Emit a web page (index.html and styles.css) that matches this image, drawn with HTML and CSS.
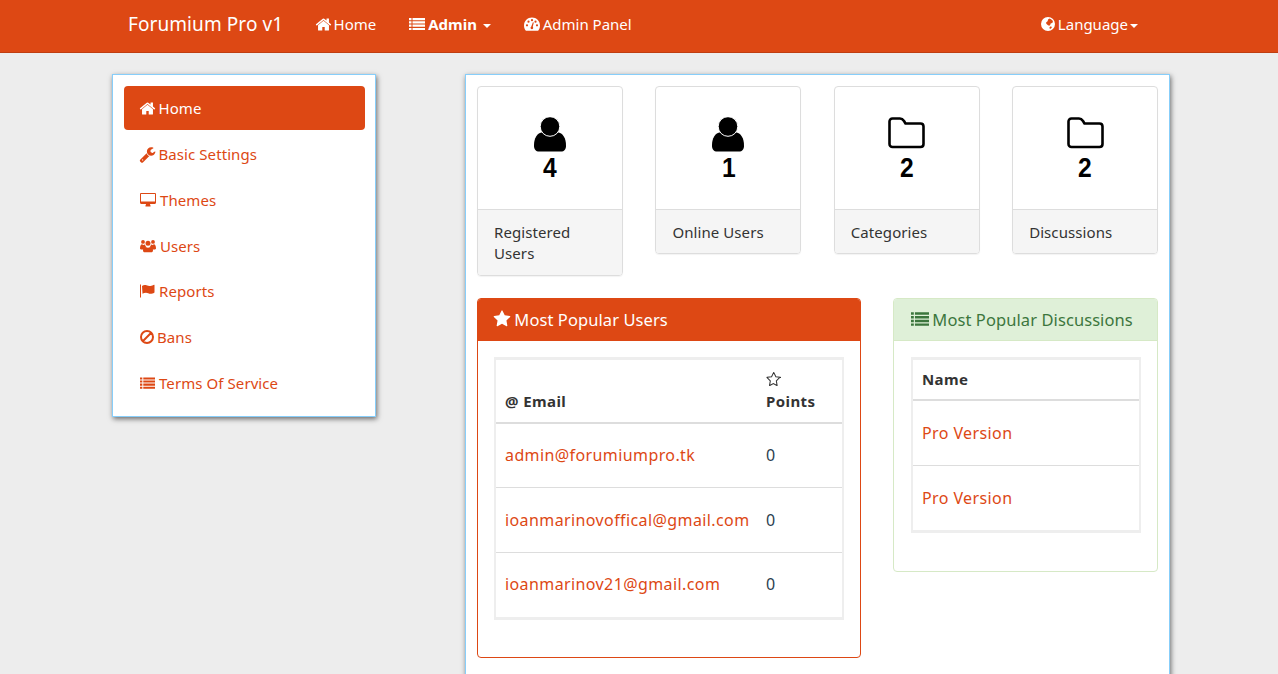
FILE: index.html
```html
<!DOCTYPE html>
<html lang="en">
<head>
<meta charset="utf-8">
<title>Forumium Pro v1</title>
<link rel="stylesheet" href="styles.css">
</head>
<body>
<svg class="sprite" aria-hidden="true">
  <symbol id="i-home" viewBox="0 0 1792 1792"><path d="M1472 992v480q0 26-19 45t-45 19h-384v-384h-256v384h-384q-26 0-45-19t-19-45v-480q0-1 .5-3t.5-3l575-474 575 474q1 2 1 6zm223-69l-62 74q-8 9-21 11h-3q-13 0-21-7l-692-577-692 577q-12 8-24 7-13-2-21-11l-62-74q-8-10-7-23.500t11-21.500l719-599q32-26 76-26t76 26l244 204v-195q0-14 9-23t23-9h192q14 0 23 9t9 23v408l219 182q10 8 11 21.500t-7 23.500z"/></symbol>
  <symbol id="i-list" viewBox="0 0 16 14"><path d="M0 1h2.500v2.200H0zM3.500 1H16v2.200H3.500zM0 4.300h2.500v2.200H0zM3.500 4.300H16v2.200H3.500zM0 7.600h2.500v2.200H0zM3.500 7.600H16v2.200H3.500zM0 10.900h2.500v2.200H0zM3.500 10.900H16v2.200H3.500z"/></symbol>
  <symbol id="i-gauge" viewBox="0 0 16 14"><path fill-rule="evenodd" d="M8 0.500C3.600 0.500 0 4 0 8.400c0 1.900.6 3.600 1.700 5 .1.200.3.300.5.300h11.600c.2 0 .4-.1.500-.3 1.100-1.400 1.700-3.100 1.700-5C16 4 12.400.5 8 .5zM3 9.400a1.100 1.100 0 1 1 0-2.200 1.100 1.100 0 0 1 0 2.200zM4.500 5.800a1.100 1.100 0 1 1 0-2.200 1.100 1.100 0 0 1 0 2.200zM8 4.300a1.100 1.100 0 1 1 0-2.200 1.100 1.100 0 0 1 0 2.200zM11.500 5.800a1.100 1.100 0 1 1 0-2.200 1.100 1.100 0 0 1 0 2.200zM13 9.400a1.100 1.100 0 1 1 0-2.200 1.100 1.100 0 0 1 0 2.200zM8 12.300a1.500 1.500 0 0 1-.7-2.800l1.600-4.200 .9.300-1 4.200A1.500 1.500 0 0 1 8 12.300z"/></symbol>
  <symbol id="i-globe" viewBox="0 0 14 14"><path fill-rule="evenodd" d="M7 0a7 7 0 1 0 0 14A7 7 0 0 0 7 0zM8.500 1.500c1 .3 2 .9 2.800 1.700.8 1 .8 2 .1 2.600-.6.500-1.300.2-1.800.9-.4.600-.1 1.300-.7 1.700-.7.400-1.500 0-2.200-.5C6 7.300 5 6.800 5.100 5.800c.1-.8 1-1 1.500-1.500.5-.6-.1-1.200.5-1.900.3-.4.800-.6 1.400-.9zM9.300 9.500c.7-.3 1.500.1 1.500.7 0 .7-1 1.600-1.700 1.600-.7 0-.8-.6-.6-1.200.1-.5.3-.9.800-1.100z"/></symbol>
  <symbol id="i-wrench" viewBox="0 0 1792 1792"><path d="M448 1472q0-26-19-45t-45-19-45 19-19 45 19 45 45 19 45-19 19-45zm644-420l-682 682q-37 37-90 37-52 0-91-37l-106-108q-38-36-38-90 0-53 38-91l681-681q39 98 114.500 173.500t173.500 114.500zm634-435q0 39-23 106-47 134-164.500 217.500t-258.500 83.500q-185 0-316.500-131.500t-131.500-316.500 131.500-316.500 316.500-131.500q58 0 121.500 16.500t107.500 46.500q16 11 16 28t-16 28l-293 169v224l193 107q5-3 79-48.500t135.500-81 70.500-35.500q15 0 23.500 10t8.500 25z"/></symbol>
  <symbol id="i-desktop" viewBox="0 0 16 14"><path fill-rule="evenodd" d="M1.200 0h13.600C15.500 0 16 .5 16 1.200v8.600c0 .7-.5 1.200-1.200 1.200H10c0 .8.300 1.300.6 1.700.2.300 0 .7-.4.700H5.800c-.4 0-.6-.4-.4-.7.300-.4.600-.9.600-1.700H1.200C.5 11 0 10.500 0 9.800V1.200C0 .5.500 0 1.200 0zM1 1v7.500h14V1z"/></symbol>
  <symbol id="i-users" viewBox="0 0 16 14"><path d="M8 1.700a2.500 2.500 0 1 1 0 5 2.500 2.500 0 0 1 0-5zM3 1a1.900 1.900 0 1 1 0 3.800A1.900 1.900 0 0 1 3 1zM13 1a1.900 1.900 0 1 1 0 3.800A1.900 1.900 0 0 1 13 1zM4.700 5.300c.2 1 .8 1.800 1.500 2.300-1.300.4-2.300 1.500-2.600 2.800H1C.4 10.400 0 10 0 9.300 0 7.300.7 5.300 2.200 5.300c.3.200.8.600 1.600.6.300 0 .7-.3.900-.6zM11.300 5.300c.2.300.6.600.9.600.8 0 1.300-.4 1.600-.6 1.500 0 2.200 2 2.200 4 0 .7-.4 1.100-1 1.100h-2.600c-.3-1.300-1.300-2.400-2.600-2.800.7-.5 1.300-1.300 1.500-2.300zM5.900 8c.5.400 1.200.7 2.100.7s1.600-.3 2.100-.7c1.600 0 2.900 1.400 2.900 3.500 0 1.100-.7 1.800-1.700 1.800H4.700C3.700 13.300 3 12.600 3 11.500 3 9.400 4.300 8 5.900 8z"/></symbol>
  <symbol id="i-flag" viewBox="0 0 15 14"><path d="M0 .5h1v13H0zM2 2c1.500-1.200 3-1.300 4.500-.7 1.500.6 2.900.9 4 .6 1.300-.3 2.500-.6 3.500-1.100.3 0 .5.100.5.400v7c0 .2-.1.400-.3.500-1 .6-2.300 1.100-3.700 1.100-1.600 0-2.900-1.100-4.500-1.100-1.300 0-2.500.5-3.500 1.100z"/></symbol>
  <symbol id="i-ban" viewBox="0 0 14 14"><path fill="none" stroke="currentColor" stroke-width="2" d="M7 1a6 6 0 1 1 0 12A6 6 0 0 1 7 1zM2.800 11.200l8.400-8.400"/></symbol>
  <symbol id="i-star" viewBox="0 0 1792 1792"><path d="M1728 647q0 22-26 48l-363 354 86 500q1 7 1 20 0 21-10.500 35.500t-30.500 14.500q-19 0-40-12l-449-236-449 236q-22 12-40 12-21 0-31.500-14.500t-10.500-35.500q0-6 2-20l86-500-364-354q-25-27-25-48 0-37 56-46l502-73 225-455q19-41 49-41t49 41l225 455 502 73q56 9 56 46z"/></symbol>
  <symbol id="i-star-o" viewBox="0 0 1792 1792"><path fill="none" stroke="currentColor" stroke-width="125" d="M1640 647q0 12-20 32l-385 375 91 530q1 6 1 14 0 14-8 14-10 0-22-7l-421-222-421 222q-12 7-22 7-8 0-8-14 0-8 1-14l91-530-385-375q-20-20-20-32 0-8 22-12l532-77 238-482q9-18 18-18t18 18l238 482 532 77q22 4 22 12z"/></symbol>
  <symbol id="i-user" viewBox="0 0 32 36"><path d="M0 28.500C0 21 3 16 8.500 15.200H23.500C29 16 32 21 32 28.500 32 32.500 30 34.500 27 34.500H5C2 34.500 0 32.500 0 28.500Z"/><circle cx="16" cy="9.500" r="9.800" stroke="#fff" stroke-width="1"/></symbol>
  <symbol id="i-folder" viewBox="0 0 37 32"><path fill="none" stroke="currentColor" stroke-width="2.600" stroke-linejoin="round" d="M4.500 1.500h7.500c2 0 3 1 4 2.500l1.500 2.500H32.500c1.800 0 3 1.200 3 3V27c0 1.800-1.200 3-3 3H4.500c-1.800 0-3-1.200-3-3V4.500c0-1.800 1.200-3 3-3Z"/></symbol>
</svg>

<nav class="navbar">
  <a class="brand">Forumium Pro v1</a>
  <a class="nav-link"><svg class="ico ico-home"><use href="#i-home"/></svg> Home</a>
  <a class="nav-link nav-bold"><svg class="ico ico-wide"><use href="#i-list"/></svg> Admin <span class="caret"></span></a>
  <a class="nav-link"><svg class="ico ico-wide"><use href="#i-gauge"/></svg> Admin Panel</a>
  <a class="nav-link nav-right"><svg class="ico ico-globe"><use href="#i-globe"/></svg> Language<span class="caret"></span></a>
</nav>

<div class="page">
  <aside class="sidebar">
    <a class="side-item active"><svg class="ico ico-home"><use href="#i-home"/></svg> Home</a>
    <a class="side-item"><svg class="ico ico-home"><use href="#i-wrench"/></svg> Basic Settings</a>
    <a class="side-item"><svg class="ico ico-wide"><use href="#i-desktop"/></svg> Themes</a>
    <a class="side-item"><svg class="ico ico-wide"><use href="#i-users"/></svg> Users</a>
    <a class="side-item"><svg class="ico ico-flag"><use href="#i-flag"/></svg> Reports</a>
    <a class="side-item"><svg class="ico ico-globe"><use href="#i-ban"/></svg> Bans</a>
    <a class="side-item"><svg class="ico ico-flag"><use href="#i-list"/></svg> Terms Of Service</a>
  </aside>

  <main class="main">
    <section class="stats">
      <div class="stat">
        <div class="stat-body"><svg class="stat-user"><use href="#i-user"/></svg><div class="stat-num">4</div></div>
        <div class="stat-foot">Registered Users</div>
      </div>
      <div class="stat">
        <div class="stat-body"><svg class="stat-user"><use href="#i-user"/></svg><div class="stat-num">1</div></div>
        <div class="stat-foot">Online Users</div>
      </div>
      <div class="stat">
        <div class="stat-body"><svg class="stat-folder"><use href="#i-folder"/></svg><div class="stat-num">2</div></div>
        <div class="stat-foot">Categories</div>
      </div>
      <div class="stat">
        <div class="stat-body"><svg class="stat-folder"><use href="#i-folder"/></svg><div class="stat-num">2</div></div>
        <div class="stat-foot">Discussions</div>
      </div>
    </section>

    <section class="panels">
      <div class="panel panel-primary">
        <h3 class="panel-head"><svg class="ico ico-star"><use href="#i-star"/></svg> Most Popular Users</h3>
        <div class="panel-body">
          <table class="table">
            <thead>
              <tr><th class="col-email">@ Email</th><th><svg class="ico ico-staro"><use href="#i-star-o"/></svg><br>Points</th></tr>
            </thead>
            <tbody>
              <tr><td><a>admin@forumiumpro.tk</a></td><td>0</td></tr>
              <tr><td><a>ioanmarinovoffical@gmail.com</a></td><td>0</td></tr>
              <tr><td><a>ioanmarinov21@gmail.com</a></td><td>0</td></tr>
            </tbody>
          </table>
        </div>
      </div>
      <div class="panel panel-success">
        <h3 class="panel-head"><svg class="ico ico-listhead"><use href="#i-list"/></svg> Most Popular Discussions</h3>
        <div class="panel-body">
          <table class="table">
            <thead><tr><th>Name</th></tr></thead>
            <tbody>
              <tr><td><a>Pro Version</a></td></tr>
              <tr><td><a>Pro Version</a></td></tr>
            </tbody>
          </table>
        </div>
      </div>
    </section>
  </main>
</div>
</body>
</html>
```

FILE: styles.css
```css
* { box-sizing: border-box; }
html { overflow: hidden; }
body {
  margin: 0;
  background: #ededed;
  color: #333;
  font-family: "Noto Sans", "Open Sans", sans-serif;
  font-size: 15px;
  line-height: 21.4px;
  letter-spacing: .08px;
}
.sprite { display: none; }
a { color: #dd4814; text-decoration: none; }

.ico { fill: currentColor; vertical-align: -1px; display: inline-block; }
.ico-home { width: 17px; height: 17px; margin: -2px -1.500px -1px -1px; vertical-align: -2px; }
.ico-wide { width: 16px; height: 14px; }
.ico-globe { width: 14px; height: 14px; }
.ico-flag { width: 15px; height: 14px; }
.ico-star { width: 18px; height: 18px; margin-left: -1px; margin-right: -1px; vertical-align: -2px; }
.ico-staro { width: 15px; height: 15px; vertical-align: -1px; color: #333; }
.ico-listhead { width: 18px; height: 16px; margin-left: 1px; margin-right: -1px; vertical-align: -1px; }

.navbar {
  display: flex;
  align-items: center;
  height: 53px;
  padding: 0 124px 2px 128px;
  background: #dd4814;
  border-bottom: 1px solid #bf3e11;
  color: #fff;
  letter-spacing: 0;
}
.navbar a { color: #fff; }
.brand { font-size: 19px; margin-right: 17px; letter-spacing: .08px; }
.nav-link { padding: 0 16px; white-space: nowrap; }
.nav-link .ico-home { margin-right: -2.500px; }
.nav-link .ico-wide, .nav-link .ico-globe { margin-right: -1px; }
.nav-bold { font-weight: 700; margin: 0 1px; }
.nav-right { margin-left: auto; }
.caret {
  display: inline-block;
  width: 0;
  height: 0;
  margin-left: 2px;
  border-top: 4px solid #fff;
  border-left: 4.500px solid transparent;
  border-right: 4.500px solid transparent;
  vertical-align: 2px;
}

.page {
  display: flex;
  align-items: flex-start;
  gap: 89px;
  padding: 21px 0 0 112px;
}
.sidebar, .main {
  background: #fff;
  border: 1px solid #87cefa;
  box-shadow: 1px 2px 5px rgba(0, 0, 0, .55);
}
.sidebar {
  display: flex;
  flex-direction: column;
  gap: 2px;
  width: 264px;
  padding: 11px 10px 12px 11px;
}
.side-item {
  display: block;
  padding: 12.200px 16px 10.200px;
  border-radius: 4px;
}
.side-item .ico-globe { margin-right: -1px; }
.side-item.active { background: #dd4814; color: #fff; }

.main {
  width: 705px;
  padding: 11px 11px 30px;
}
.stats {
  display: grid;
  grid-template-columns: repeat(4, 1fr);
  gap: 32.500px;
  align-items: start;
  margin-bottom: 22px;
}
.stat {
  border: 1px solid #ddd;
  border-radius: 4px;
  box-shadow: 0 1px 1px rgba(0, 0, 0, .05);
  overflow: hidden;
}
.stat-body {
  display: flex;
  flex-direction: column;
  align-items: center;
  height: 122px;
  padding-top: 29.500px;
  color: #000;
}
.stat-user { width: 32px; height: 36px; display: block; fill: #000; }
.stat-folder { width: 37px; height: 32px; display: block; color: #000; margin-bottom: 4px; }
.stat-num {
  font-family: "Liberation Sans", Arial, sans-serif;
  font-weight: 700;
  font-size: 28px;
  line-height: 30px;
  letter-spacing: 0;
  transform: scaleX(.88);
}
.stat-foot {
  padding: 12px 16px 10px;
  background: #f5f5f5;
  border-top: 1px solid #ddd;
}

.panels {
  display: flex;
  align-items: flex-start;
  gap: 32px;
}
.panel {
  border: 1px solid;
  border-radius: 4px;
  overflow: hidden;
}
.panel-primary { width: 384px; border-color: #dd4814; }
.panel-success { width: 265px; border-color: #d6e9c6; }
.panel-head {
  margin: 0;
  padding: 10px 16px;
  height: 42px;
  font-size: 16.500px;
  font-weight: 400;
  line-height: 22px;
}
.panel-primary .panel-head { background: #dd4814; color: #fff; }
.panel-success .panel-head { background: #dff0d8; color: #3c763d; border-bottom: 1px solid #d6e9c6; }
.panel-body { padding: 16px; }
.panel-success .panel-body { padding-left: 17px; }

.table {
  width: 100%;
  table-layout: fixed;
  border-collapse: separate;
  border-spacing: 0;
  border: solid #eee;
  border-width: 3px 2px;
  margin-bottom: 21.500px;
}
.table th {
  padding: 10px 10px 9px 9px;
  text-align: left;
  vertical-align: bottom;
  font-weight: 700;
  letter-spacing: .4px;
  border-bottom: 2px solid #ddd;
}
.table td {
  padding: 21.300px 10px 21px 9px;
  border-top: 1px solid #ddd;
  color: #2c3e50;
  font-size: 16px;
  letter-spacing: .4px;
  white-space: nowrap;
}
.panel-success .table th { padding-top: 9px; }
.panel-success .table td { padding-top: 22px; padding-bottom: 20px; }
.panel-success .table tr + tr td { padding-top: 22.500px; padding-bottom: 20.500px; }
.table tbody tr:first-child td { border-top: 0; }
.col-email { width: 261px; }
```
